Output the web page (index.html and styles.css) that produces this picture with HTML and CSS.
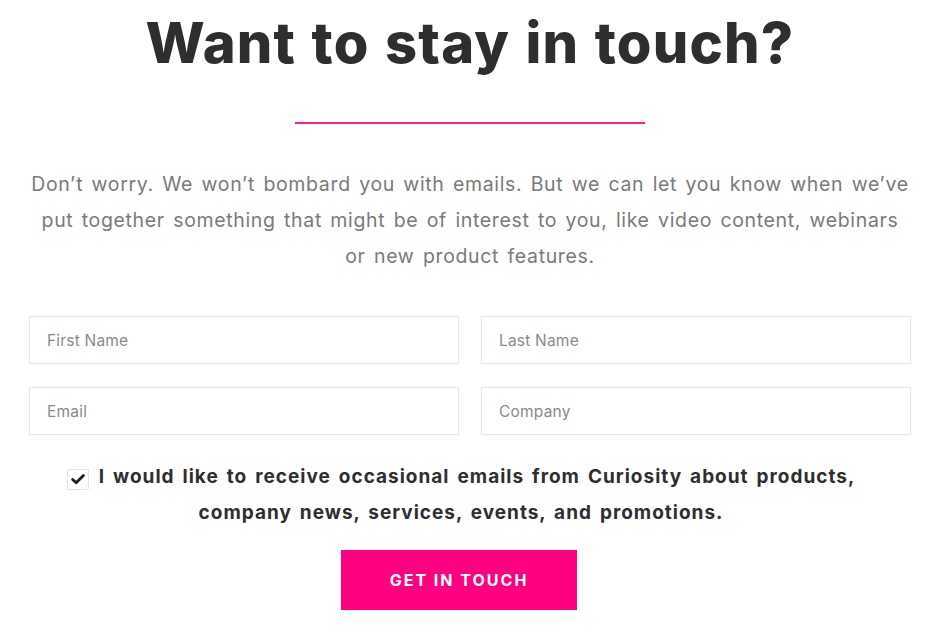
FILE: index.html
```html
<!DOCTYPE html>
<html lang="en">
<head>
<meta charset="utf-8">
<title>Want to stay in touch?</title>
<link rel="stylesheet" href="styles.css">
</head>
<body>
<main class="contact">
  <h1 class="title">Want to stay in touch?</h1>
  <div class="divider"></div>
  <p class="intro">Don’t worry. We won’t bombard you with emails. But we can let you know when we’ve<br>put together something that might be of interest to you, like video content, webinars<br>or new product features.</p>
  <form class="form">
    <div class="grid">
      <input class="field" type="text" placeholder="First Name">
      <input class="field" type="text" placeholder="Last Name">
      <input class="field" type="email" placeholder="Email">
      <input class="field" type="text" placeholder="Company">
    </div>
    <label class="consent">
      <span class="box"><svg viewBox="0 0 16 16" width="16" height="16"><path d="M2.6 8.4 L6.2 11.8 L13.4 4.6" fill="none" stroke="#1e1e1e" stroke-width="2.8" stroke-linecap="round" stroke-linejoin="round"/></svg></span>I would like to receive occasional emails from Curiosity about products,<br>company news, services, events, and promotions.
    </label>
    <div class="actions">
      <button class="submit" type="button">GET IN TOUCH</button>
    </div>
  </form>
</main>
</body>
</html>
```
FILE: styles.css
```css
html, body {
  margin: 0;
  padding: 0;
  background: #fff;
}
body {
  font-family: Inter, "Open Sans", sans-serif;
}
.contact {
  width: 882px;
  margin: 0 auto;
  padding-left: 1px;
  display: flex;
  flex-direction: column;
  align-items: center;
}
.title {
  margin: 8px 0 0;
  font-size: 56px;
  line-height: 70px;
  font-weight: 800;
  letter-spacing: 1.2px;
  word-spacing: 2px;
  color: #2e2e30;
  white-space: nowrap;
}
.divider {
  width: 350px;
  height: 2px;
  background: #ff1f8a;
  margin-top: 44px;
}
.intro {
  margin: 42px 0 0;
  text-align: center;
  font-size: 19.5px;
  line-height: 36px;
  letter-spacing: 0.65px;
  word-spacing: 2.3px;
  color: #7a7a7a;
  font-weight: 400;
  white-space: nowrap;
}
.form {
  width: 100%;
  margin-top: 42px;
}
.grid {
  display: grid;
  grid-template-columns: 1fr 1fr;
  column-gap: 22px;
  row-gap: 23px;
}
.field {
  box-sizing: border-box;
  height: 48px;
  border: 1px solid #e6e6e6;
  box-shadow: 0 0 2px rgba(0,0,0,0.05);
  padding: 0 17px;
  font-family: Inter, sans-serif;
  font-size: 15.5px;
  letter-spacing: 0.2px;
  color: #333;
  background: #fff;
  outline: none;
}
.field::placeholder {
  color: #8a8a8a;
}
.consent {
  display: block;
  margin-top: 24px;
  text-align: center;
  font-size: 19px;
  line-height: 36px;
  font-weight: 700;
  letter-spacing: 1px;
  word-spacing: 2.5px;
  color: #2e2e30;
  padding-right: 18px;
  white-space: nowrap;
}
.box {
  display: inline-flex;
  align-items: center;
  justify-content: center;
  width: 22px;
  height: 21px;
  box-sizing: border-box;
  border: 1px solid #e4e4e4;
  border-radius: 2px;
  vertical-align: -4px;
  margin-right: 10px;
}
.actions {
  display: flex;
  justify-content: center;
  margin-top: 19px;
  padding-right: 22px;
}
.submit {
  width: 236px;
  height: 60px;
  border: 0;
  background: #ff0080;
  color: #fff;
  font-family: Inter, sans-serif;
  font-size: 16px;
  font-weight: 700;
  letter-spacing: 2px;
  cursor: pointer;
}
```
